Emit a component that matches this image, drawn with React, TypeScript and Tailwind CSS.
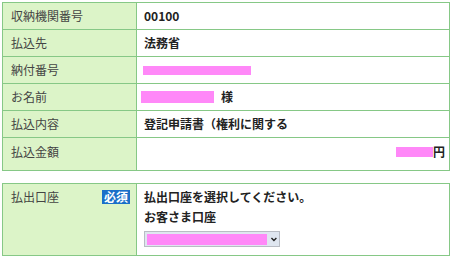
import React from 'react';

const rows = [
  { label: '収納機関番号', value: <span className="font-bold">00100</span> },
  { label: '払込先', value: <span className="font-bold">法務省</span> },
  { label: '納付番号', value: <span className="block w-[108px] h-[9px] bg-[#ff88f8] ml-[-1px]" /> },
  {
    label: 'お名前',
    value: (
      <span className="flex items-center">
        <span className="block w-[73px] h-[12px] bg-[#ff88f8] ml-[-3px]" />
        <span className="font-bold ml-[7px]">様</span>
      </span>
    ),
  },
  { label: '払込内容', value: <span className="font-bold">登記申請書（権利に関する</span> },
];

const App: React.FC = () => {
  return (
    <div className="w-[452px] h-[256px] bg-white pt-[2px] pl-[2px] text-[12px] text-[#333] font-['Noto_Sans_CJK_JP','Noto_Sans',sans-serif] overflow-hidden">
      <div className="w-[448px] border border-[#86c886]">
        {rows.map((r) => (
          <div key={r.label} className="grid grid-cols-[134px_1fr] border-b border-[#86c886] h-[27px]">
            <div className="bg-[#dcf4c8] border-r border-[#86c886] pl-[8px] flex items-center text-[#444]">{r.label}</div>
            <div className="pl-[7px] flex items-center text-[#222]">{r.value}</div>
          </div>
        ))}
        <div className="grid grid-cols-[134px_1fr] h-[32px]">
          <div className="bg-[#dcf4c8] border-r border-[#86c886] pl-[8px] pt-[5px] text-[#444]">払込金額</div>
          <div className="flex justify-end items-start pt-[8px] pr-[4px]">
            <span className="block w-[37px] h-[10px] bg-[#ff88f8] mt-[1px]" />
            <span className="font-bold text-[#222] leading-[12px]">円</span>
          </div>
        </div>
      </div>

      <div className="w-[448px] border border-[#86c886] mt-[12px]">
        <div className="grid grid-cols-[134px_1fr] h-[71px]">
          <div className="bg-[#dcf4c8] border-r border-[#86c886] pl-[8px] pr-[6px] pt-[5px] flex items-start justify-between text-[#444]">
            <span className="leading-[16px]">払出口座</span>
            <span className="bg-[#1a6fc8] text-white font-bold text-[12px] leading-[14px] px-[2px] mt-[1px]">必須</span>
          </div>
          <div className="pl-[7px] pt-[5px] text-[#222] font-bold">
            <div className="leading-[16px]">払出口座を選択してください。</div>
            <div className="leading-[16px] mt-[4px]">お客さま口座</div>
            <div className="mt-[6px] w-[136px] h-[16px] border border-[#b8bcc4] bg-[#dfe6f0] flex items-center pl-[2px]">
              <span className="block w-[122px] h-[11px] bg-[#ff88f8]" />
              <svg width="10" height="10" viewBox="0 0 10 10" className="ml-[2px]">
                <path d="M2.5 4 L5 6.5 L7.5 4" stroke="#222" strokeWidth="1.4" fill="none" />
              </svg>
            </div>
          </div>
        </div>
      </div>
    </div>
  );
};

export default App;
